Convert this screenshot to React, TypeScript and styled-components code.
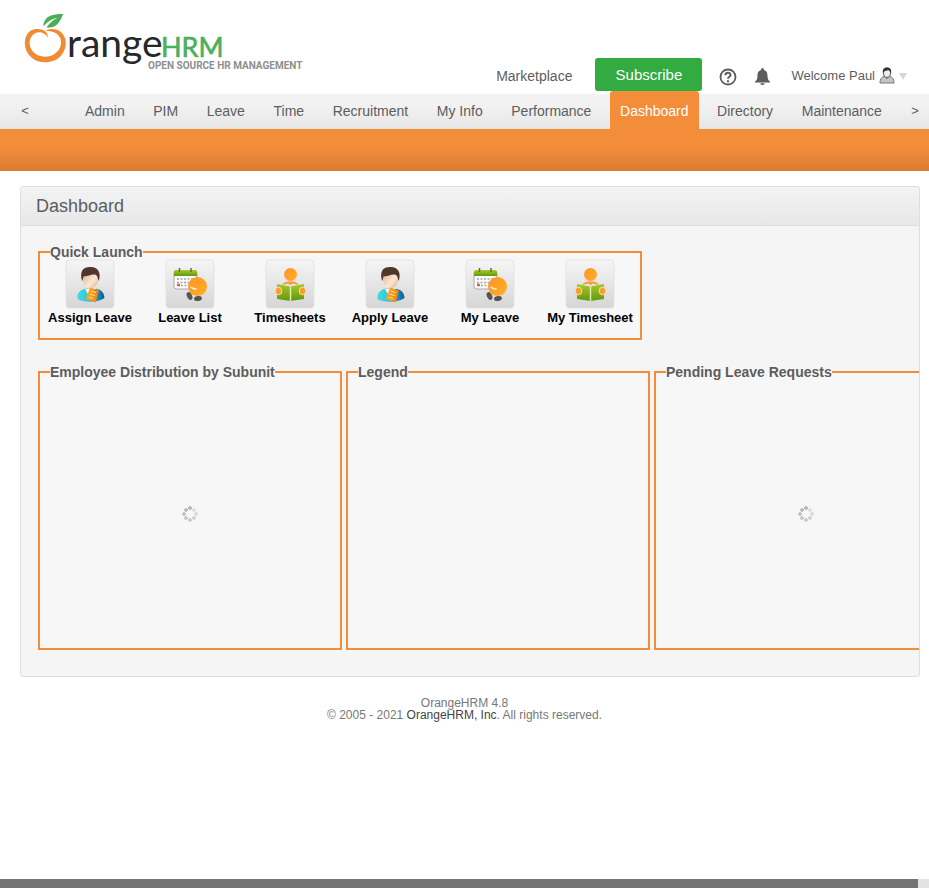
import React from "react";
import styled, { createGlobalStyle, css } from "styled-components";

const orange = "#f38d3a";
const ink = "#5d5d5d";

const GlobalStyle = createGlobalStyle`
  *, *::before, *::after { box-sizing: border-box; }
  body {
    margin: 0;
    background: #fff;
    color: ${ink};
    font-family: "Liberation Sans", Arial, sans-serif;
    font-size: 14px;
  }
  a { color: inherit; text-decoration: none; }
  button { font: inherit; color: inherit; border: 0; background: none; padding: 0; cursor: pointer; }
`;

const Page = styled.div`
  display: flex;
  flex-direction: column;
  min-height: 100vh;
  overflow: hidden;
`;

const Header = styled.header`
  display: flex;
  justify-content: space-between;
  height: 94px;
  padding: 0 20px;
`;

const LogoLink = styled.a`
  display: block;
  padding-top: 10px;
`;

const Tools = styled.div`
  display: flex;
  align-items: center;
  align-self: flex-end;
  height: 33px;
  margin-bottom: 3px;
`;

const MarketLink = styled.a`
  padding: 2px 0 0;
  margin-right: 23px;
`;

const Subscribe = styled.button`
  width: 107px;
  height: 33px;
  border-radius: 3px;
  background: #32ab40;
  color: #fff;
  font-size: 15px;
`;

const IconButton = styled.button`
  display: flex;
  margin: 4px 0 0 17px;
`;

const UserMenu = styled.button`
  display: flex;
  align-items: center;
  gap: 4px;
  margin: 2px 2px 0 20px;
  font-size: 13px;
`;

const Nav = styled.nav`
  display: flex;
  align-items: flex-end;
  height: 35px;
  padding: 0 10px 0 21px;
  background: linear-gradient(#f3f3f3 0%, #f1f1f1 40%, #e6e6e6 100%);
`;

const Arrow = styled.button`
  align-self: flex-start;
  width: 8px;
  height: 32px;
  font-size: 13px;
`;

const Menu = styled.ul`
  display: flex;
  flex: 1;
  justify-content: space-between;
  margin: 0;
  padding: 0 19px 0 46px;
  list-style: none;
  white-space: nowrap;
`;

const MenuLink = styled.a<{ $active?: boolean }>`
  display: block;
  height: 38px;
  padding: 0 10px;
  line-height: 40px;
  ${({ $active }) =>
    $active &&
    css`
      background: ${orange};
      color: #fff;
      border-radius: 3px 3px 0 0;
    `}
`;

const Band = styled.div`
  height: 42px;
  background: linear-gradient(${orange} 0%, #f48d3a 45%, #d87b32 100%);
`;

const Panel = styled.main`
  margin: 15px 9px 0 20px;
  border: 1px solid #dedede;
  border-radius: 3px;
  background: #f5f5f5;
  overflow: hidden;
`;

const PanelHead = styled.div`
  height: 39px;
  padding: 0 15px;
  border-bottom: 1px solid #dedede;
  background: linear-gradient(#f3f3f3, #e8e8e8);
`;

const Title = styled.h1`
  margin: 0;
  font-size: 18px;
  font-weight: 400;
  line-height: 38px;
`;

const PanelBody = styled.div`
  display: flex;
  flex-direction: column;
  align-items: flex-start;
  gap: 24px;
  padding: 18px 0 26px 17px;
`;

const Box = styled.fieldset<{ $tall?: boolean }>`
  flex: none;
  min-width: 0;
  width: ${({ $tall }) => ($tall ? "304px" : "auto")};
  height: ${({ $tall }) => ($tall ? "286px" : "96px")};
  margin: 0;
  padding: 0;
  border: 2px solid ${orange};
  background: #f7f7f7;
`;

const Legend = styled.legend`
  margin-left: 10px;
  padding: 0;
  font-weight: 700;
  line-height: 16px;
`;

const Launchers = styled.div`
  display: flex;
  margin-top: -1px;
`;

const Launcher = styled.a`
  display: flex;
  flex-direction: column;
  align-items: center;
  width: 100px;
  color: #000;
  font-size: 13px;
  font-weight: 700;
  line-height: 18px;
  white-space: nowrap;
`;

const Widgets = styled.div`
  display: flex;
  gap: 4px;
`;

const Loading = styled.div`
  display: flex;
  align-items: center;
  justify-content: center;
  height: 268px;
`;

const Footer = styled.footer`
  padding-top: 20px;
  color: #777;
  font-size: 12px;
  line-height: 12px;
  text-align: center;

  a { color: #444; }
`;

const ScrollTrack = styled.div`
  height: 9px;
  margin-top: auto;
  padding-right: 11px;
  background: #e3e3e3;
`;

const ScrollThumb = styled.div`
  height: 9px;
  background: #747474;
`;

function Logo() {
  return (
    <svg width="290" height="65" viewBox="20 10 290 65" role="img" aria-label="OrangeHRM">
      <path
        d="M47.800 38C46.500 33.500 40.500 30.800 36 32.800C30 35.500 28.500 42 30.500 47.500C34 57 47 59 54.500 54C61.500 49.500 63 40.500 58.500 35.500C55 31.500 49.500 31 45 30.800C50.500 27.800 58 28.600 62 33C67.500 39 66.800 48.500 61.500 55C55 63.500 40 65 31.500 57.500C23 50.500 22.500 36.500 30.500 30.800C36.500 26.800 49 29 47.800 38Z"
        fill="#f28a33"
      />
      <path d="M43.500 24C45.500 16 52 14 63.200 14C60.500 20.500 57 28.800 46.500 27.600C49 23.500 52.500 20.500 57.500 17.800C51.500 19.300 47.500 21.500 43.500 26.500Z" fill="#49ae58" />
      <text x="67" y="57" fontFamily="Lato, sans-serif" fontSize="39" fill="#27272c">range</text>
      <text x="161" y="57" fontFamily="Lato, sans-serif" fontSize="27" fill="#4bb05a" stroke="#4bb05a" strokeWidth=".6">HRM</text>
      <text x="148" y="69" fontFamily="Roboto, sans-serif" fontSize="10" fontWeight="700" fill="#8b908e">
        OPEN SOURCE HR MANAGEMENT
      </text>
    </svg>
  );
}

function HelpIcon() {
  return (
    <svg width="18" height="18" viewBox="0 0 18 18" fill="none" stroke={ink} strokeWidth="2" aria-hidden="true">
      <circle cx="9" cy="9" r="7.500" strokeWidth="1.800" />
      <path d="M6.300 7.300C6.400 3.900 11.700 4 11.500 7.100C11.400 8.700 9 8.800 9 10.800" />
      <path d="M9 12.200V14.200" />
    </svg>
  );
}

function BellIcon() {
  return (
    <svg width="17" height="18" viewBox="0 0 17 18" fill={ink} aria-hidden="true">
      <path d="M8.500 0C9.500 0 10 1 9.900 1.900C13.200 2.700 13.600 5.500 13.600 9C13.600 11.500 15 13 16 13.600V14.600H1V13.600C2 13 3.400 11.500 3.400 9C3.400 5.500 3.800 2.700 7.100 1.900C7 1 7.500 0 8.500 0ZM6.300 15.200H10.700C10.500 17.600 6.500 17.600 6.300 15.200Z" />
    </svg>
  );
}

function UserIcon() {
  return (
    <svg width="16" height="17" viewBox="0 0 16 17" aria-hidden="true">
      <path d="M1 16C1 11.500 3 9.700 6 9.500H10C13 9.700 15 11.500 15 16Z" fill="#c4c4c4" stroke="#777" />
      <path d="M5 9L8 12L11 9Z" fill="#eee" stroke="#777" strokeWidth=".7" />
      <ellipse cx="8" cy="5.800" rx="3.500" ry="4.600" fill="#eee" stroke="#555" />
      <path d="M3.800 6C3.500 2 5 .5 8 .5C11 .5 12.500 2 12.200 6C11 5 11 3.800 9.500 3.200C7 3.700 5 4 3.800 6Z" fill="#333" />
    </svg>
  );
}

type IconKind = "person" | "calendar" | "reader";

function PersonArt() {
  return (
    <>
      <path d="M12.500 40C12 33.500 15 31 21 29.500H30C36 30.500 39 33 39.500 39C34 43.500 18 44 12.500 40Z" fill="url(#shirt)" />
      <path d="M20 30L25 39L31 29Z" fill="#f5f3f0" />
      <ellipse cx="25.500" cy="20" rx="7.600" ry="9.500" fill="url(#skin)" />
      <path d="M17 22C14.500 12 18 8 25 8C32.500 7.500 36.500 13 33.800 22C32.500 20 33 17.500 31 16C27 14.500 24 17.500 18.500 17.500C18 19 18 21 17 22Z" fill="#51362b" />
      <path d="M25 28.500L34 31.500L30.500 43.500L21 40Z" fill="url(#note)" />
      <path d="M26 32L31 33.700M25 35L30 36.700M24 38L28 39.500" stroke="#ffe3a0" />
    </>
  );
}

function CalendarArt() {
  return (
    <>
      <rect x="9" y="12" width="23" height="18" rx="2.500" fill="#fafafa" stroke="#aaa" />
      <path d="M9 17V13Q9 11 11 11H30Q32 11 32 13V17Z" fill="url(#leaf)" />
      <path d="M14.500 9V13M26 9V13" stroke="#666" strokeWidth="1.500" />
      <path d="M12 20H30M12 23.500H24M16 26.500H23" stroke="#a5a5a5" strokeWidth="1.500" strokeDasharray="2 1.500" />
      <path d="M12 26H15" stroke="#dc6043" strokeWidth="2.500" />
      <ellipse cx="24.500" cy="37" rx="2.600" ry="4" transform="rotate(-25 24.500 37)" fill="#555" />
      <ellipse cx="33" cy="39.500" rx="4" ry="2.500" transform="rotate(-10 33 39.500)" fill="#555" />
      <circle cx="32.500" cy="27.500" r="9.500" fill="url(#ball)" />
      <path d="M25.500 28Q28 31 31.500 30Q29 29.500 25.500 28Z" fill="#fff3d0" stroke="#fff3d0" />
    </>
  );
}

function ReaderArt() {
  return (
    <>
      <circle cx="25.500" cy="15.500" r="6.500" fill="url(#ball)" />
      <path d="M17 26Q19 22 25.500 22.500Q32 22 34 26L28 24.500L25.500 26L23 24.500Z" fill="#ff963c" />
      <path d="M12 25L25 27.500L39 25V40L25.500 42L12 40Z" fill="url(#leaf)" />
      <path d="M25.500 27V42" stroke="#e0e9b5" strokeWidth="1.500" />
      <ellipse cx="13.500" cy="32" rx="3.300" ry="3.800" fill="#ff9d20" stroke="#e4e4d8" />
      <ellipse cx="37.500" cy="32" rx="3.300" ry="3.800" fill="#ff9d20" stroke="#e4e4d8" />
    </>
  );
}

function LauncherIcon({ kind }: { kind: IconKind }) {
  return (
    <svg width="50" height="50" viewBox="0 0 50 50" aria-hidden="true">
      <rect x="1" y="1" width="48" height="48" rx="3" fill="url(#tile)" stroke="#e3e3df" />
      {kind === "person" && <PersonArt />}
      {kind === "calendar" && <CalendarArt />}
      {kind === "reader" && <ReaderArt />}
    </svg>
  );
}

const Defs = styled.svg`
  position: absolute;
`;

function Gradients() {
  return (
    <Defs width="0" height="0" aria-hidden="true">
      <linearGradient id="tile" x2="0" y2="1"><stop stopColor="#f5f5f5" /><stop offset="1" stopColor="#d6d6d6" /></linearGradient>
      <linearGradient id="shirt"><stop stopColor="#42dae4" /><stop offset=".5" stopColor="#37bed5" /><stop offset="1" stopColor="#075d94" /></linearGradient>
      <linearGradient id="skin" x2="1" y2="1"><stop stopColor="#dca77b" /><stop offset=".6" stopColor="#fae8d3" /><stop offset="1" stopColor="#dfb18b" /></linearGradient>
      <linearGradient id="note"><stop stopColor="#ffaf17" /><stop offset="1" stopColor="#f07d19" /></linearGradient>
      <linearGradient id="leaf" x2="0" y2="1"><stop stopColor="#a5cd23" /><stop offset="1" stopColor="#649510" /></linearGradient>
      <linearGradient id="ball" x2="1" y2="1"><stop stopColor="#ff932d" /><stop offset="1" stopColor="#ffb01f" /></linearGradient>
    </Defs>
  );
}

const spinnerDots = [
  [8, 2, "#b8b8b8"], [12, 4, "#e0e0dc"], [14, 8, "#dbdbd7"], [12, 12, "#d4d4d0"],
  [8, 14, "#cececa"], [4, 12, "#cacac6"], [2, 8, "#c4c4c0"], [4, 4, "#bebeba"],
] as const;

function Spinner() {
  return (
    <svg width="16" height="16" viewBox="0 0 16 16" role="img" aria-label="Loading">
      {spinnerDots.map(([x, y, color]) => (
        <path key={`${x}-${y}`} d={`M${x - 1} ${y - 2}h2v1h1v2h-1v1h-2v-1h-1v-2h1z`} fill={color} />
      ))}
    </svg>
  );
}

const menuItems = [
  "Admin", "PIM", "Leave", "Time", "Recruitment", "My Info",
  "Performance", "Dashboard", "Directory", "Maintenance",
];

const launchers: { label: string; kind: IconKind }[] = [
  { label: "Assign Leave", kind: "person" },
  { label: "Leave List", kind: "calendar" },
  { label: "Timesheets", kind: "reader" },
  { label: "Apply Leave", kind: "person" },
  { label: "My Leave", kind: "calendar" },
  { label: "My Timesheet", kind: "reader" },
];

const widgets = [
  { title: "Employee Distribution by Subunit", loading: true },
  { title: "Legend", loading: false },
  { title: "Pending Leave Requests", loading: true },
];

export default function App() {
  return (
    <Page>
      <GlobalStyle />
      <Gradients />
      <Header>
        <LogoLink href="#"><Logo /></LogoLink>
        <Tools>
          <MarketLink href="#">Marketplace</MarketLink>
          <Subscribe type="button">Subscribe</Subscribe>
          <IconButton type="button" aria-label="Help"><HelpIcon /></IconButton>
          <IconButton type="button" aria-label="Notifications"><BellIcon /></IconButton>
          <UserMenu type="button">
            Welcome Paul
            <UserIcon />
            <svg width="8" height="8" viewBox="0 0 8 8" aria-hidden="true"><path d="M0 1H8L4 8Z" fill="#d6d6d6" /></svg>
          </UserMenu>
        </Tools>
      </Header>
      <Nav aria-label="Main">
        <Arrow type="button" aria-label="Scroll left">&lt;</Arrow>
        <Menu>
          {menuItems.map((item) => (
            <li key={item}>
              <MenuLink href="#" $active={item === "Dashboard"}>{item}</MenuLink>
            </li>
          ))}
        </Menu>
        <Arrow type="button" aria-label="Scroll right">&gt;</Arrow>
      </Nav>
      <Band />
      <Panel>
        <PanelHead><Title>Dashboard</Title></PanelHead>
        <PanelBody>
          <Box>
            <Legend>Quick Launch</Legend>
            <Launchers>
              {launchers.map(({ label, kind }) => (
                <Launcher key={label} href="#">
                  <LauncherIcon kind={kind} />
                  {label}
                </Launcher>
              ))}
            </Launchers>
          </Box>
          <Widgets>
            {widgets.map(({ title, loading }) => (
              <Box key={title} $tall>
                <Legend>{title}</Legend>
                {loading && <Loading><Spinner /></Loading>}
              </Box>
            ))}
          </Widgets>
        </PanelBody>
      </Panel>
      <Footer>
        OrangeHRM 4.8<br />
        © 2005 - 2021 <a href="#">OrangeHRM, Inc</a>. All rights reserved.
      </Footer>
      <ScrollTrack><ScrollThumb /></ScrollTrack>
    </Page>
  );
}
